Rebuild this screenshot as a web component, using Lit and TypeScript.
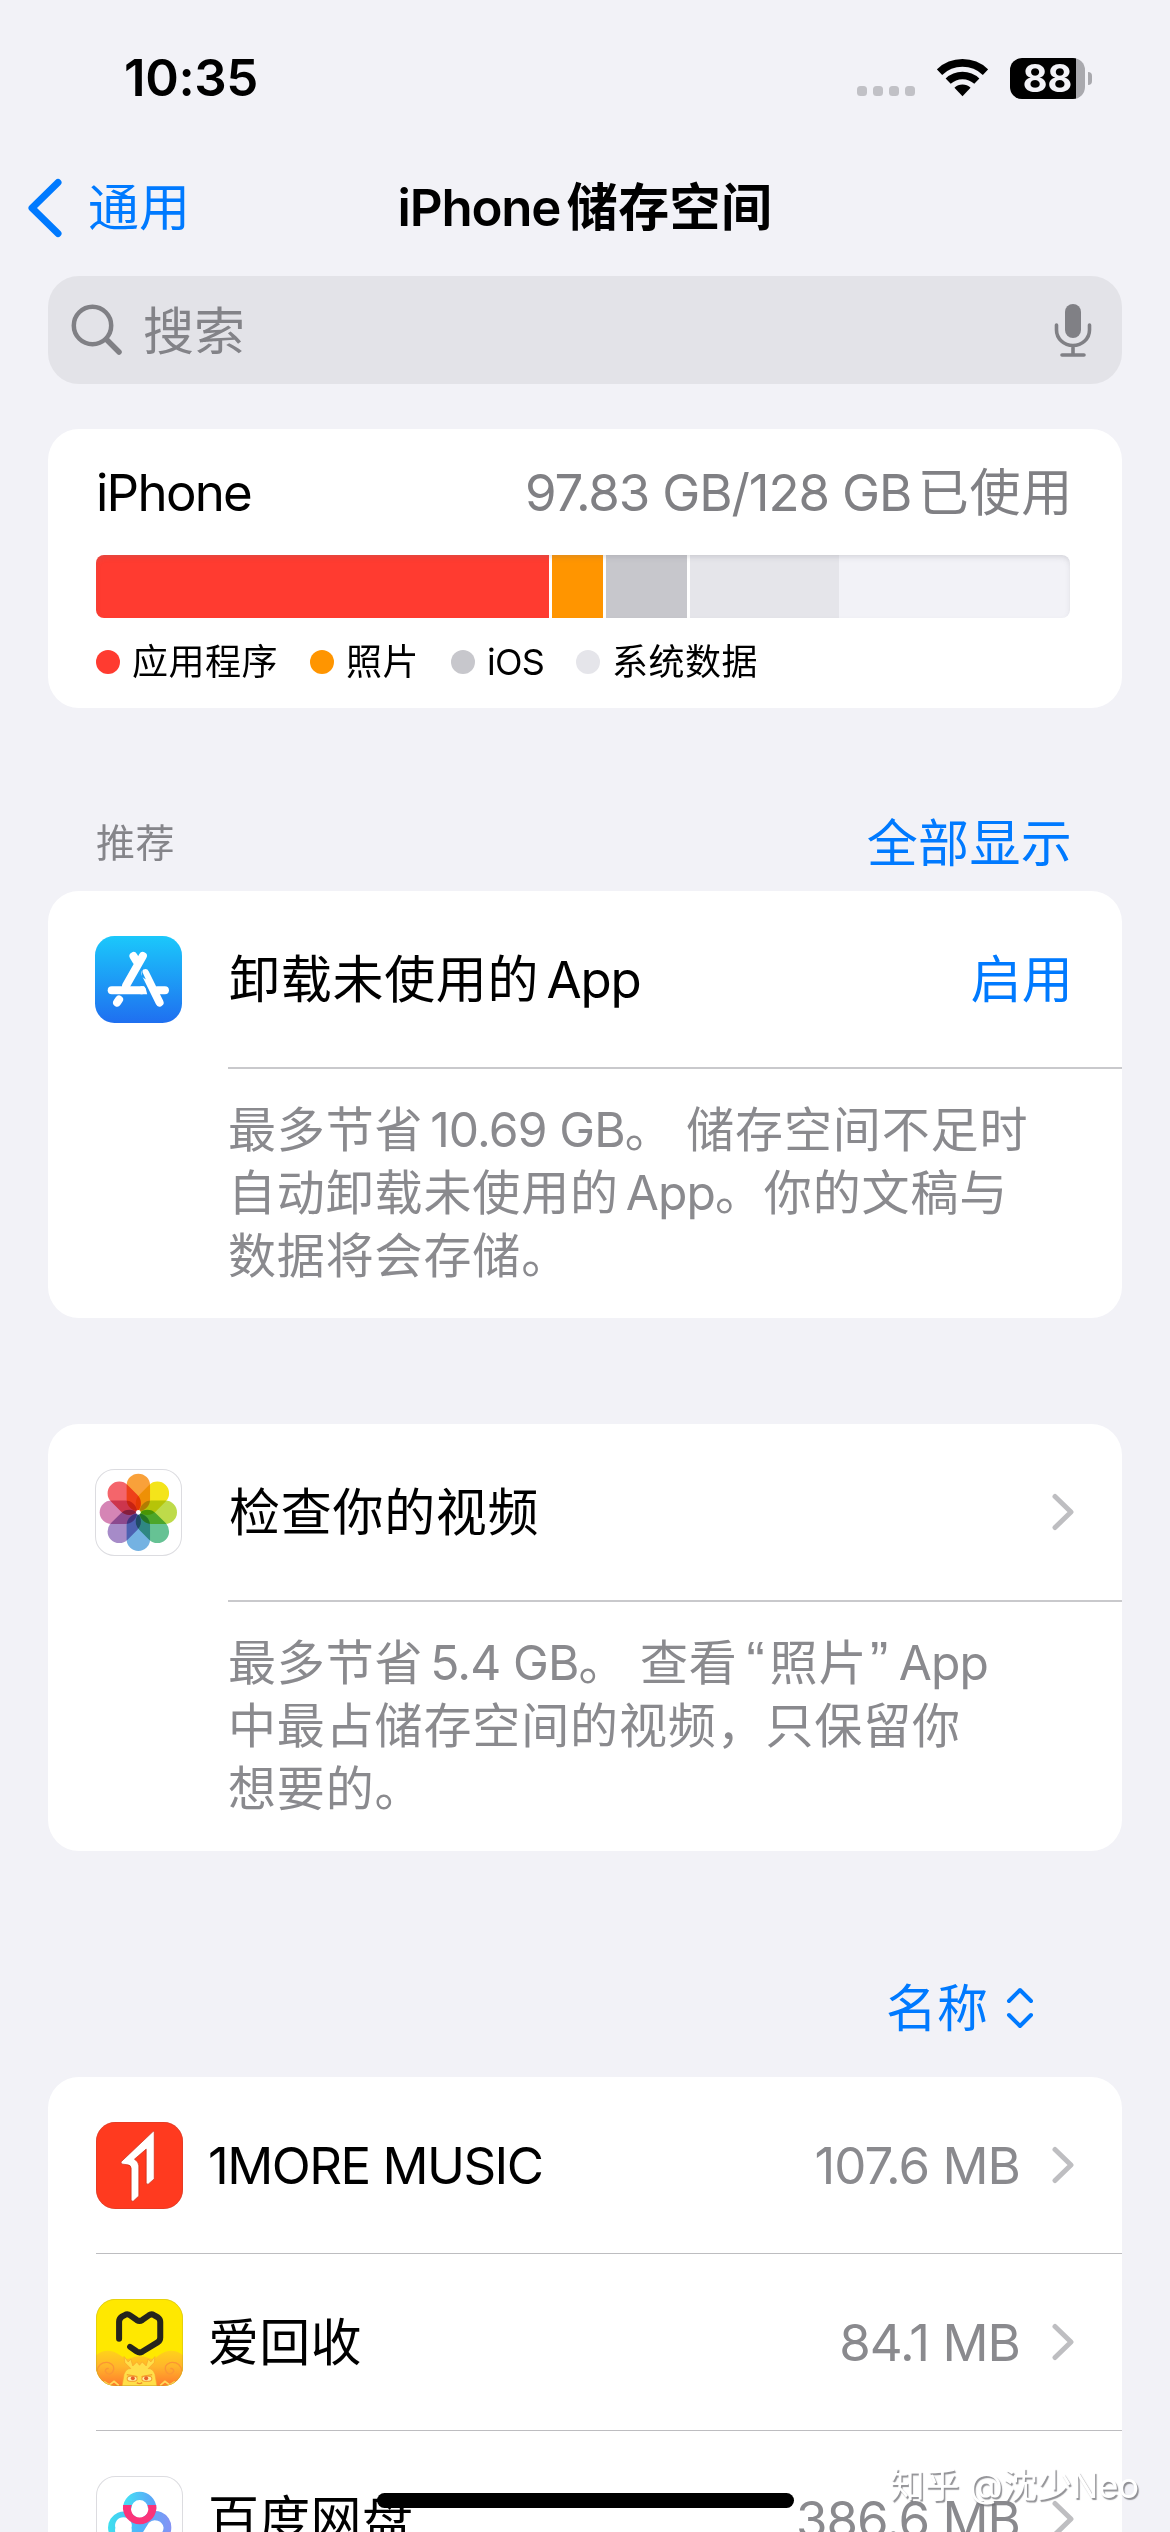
import { LitElement, html, css, svg, nothing } from "lit";
import { customElement, property } from "lit/decorators.js";

const HAN = /[\u3000-\u303f\u4e00-\u9fff\uff00-\uffef]/;
const HAN_PUNCT = /[\u3000-\u303f\uff00-\uffef]/;

/** Splits text into Han, Latin and quote-mark runs, so each gets its own tracking and edge spacing. */
function runs(text: string) {
  const parts =
    text.match(/[“”]|[\u3000-\u303f\u4e00-\u9fff\uff00-\uffef]+|[^“”\u3000-\u303f\u4e00-\u9fff\uff00-\uffef]+/g) ?? [];
  return parts.map((part, i) => {
    if (part === "“") return html`<span class="quote open">“</span>`;
    if (part === "”") return html`<span class="quote close">”</span>`;
    if (HAN.test(part)) return html`<span class="han">${part}</span>`;
    const prev = i > 0 ? parts[i - 1].slice(-1) : "";
    const next = i < parts.length - 1 ? parts[i + 1][0] : "";
    const before = prev && !HAN_PUNCT.test(prev) && part[0] !== " ";
    const after = next && !HAN_PUNCT.test(next) && part.slice(-1) !== " ";
    return html`<span class="latin ${before ? "gap-before" : ""} ${after ? "gap-after" : ""}">${part}</span>`;
  });
}

const textStyles = css`
  .han { letter-spacing: 0.014em; }
  .latin { letter-spacing: var(--latin-tracking, -0.022em); white-space: pre; }
  .gap-before { margin-left: 0.14em; }
  .gap-after { margin-right: 0.13em; }
  .quote { font-family: "Liberation Sans", sans-serif; font-size: 1.14em; line-height: 0; }
  .open { margin: 0 0.09em 0 0.16em; }
  .close { margin: 0 -0.04em 0 0.05em; }
`;

const appStoreIcon = svg`
  <defs>
    <linearGradient id="store" x1="0" y1="0" x2="0" y2="1">
      <stop offset="0" stop-color="#1bc8fb"/><stop offset="1" stop-color="#1f6ff0"/>
    </linearGradient>
  </defs>
  <rect width="260" height="260" rx="58" fill="url(#store)"/>
  <g stroke="#fff" stroke-width="24" stroke-linecap="round" fill="none">
    <path d="M115 60 L124 75"/>
    <path d="M143 60 L93 148"/>
    <path d="M150 111 L193 199"/>
    <path d="M50 162 H140"/>
    <path d="M186 162 H209"/>
    <path d="M72 190 L66 199"/>
  </g>
  <path d="M136 150 L147 150 Q154 160 156 174 L136 174Z" fill="#fff"/>
  <path d="M138 96 L145 88 Q142 96 142 108 L152 130 L140 122Z" fill="#1f9df6"/>`;

const petals = ["#f9a13a", "#f4e41a", "#bedb4a", "#66c294", "#74b2e2", "#a68bc8", "#d585b5", "#f4656b"];
const photosIcon = svg`
  <rect x="1.5" y="1.5" width="257" height="257" rx="57" fill="#fff" stroke="#dcdce0" stroke-width="3"/>
  <g class="petals">
    ${petals.map((c, i) => svg`<rect x="94.500" y="14" width="70" height="112" rx="35" fill=${c}
      transform="rotate(${i * 45} 129.5 129.5)"/>`)}
  </g>
  <circle cx="129.500" cy="129.500" r="7" fill="#fff"/>`;

const oneMoreIcon = svg`
  <rect width="260" height="260" rx="58" fill="#ff3a1f"/>
  <rect x="1" y="1" width="258" height="258" rx="57" fill="none" stroke="#b8402f" stroke-width="2" opacity=".6"/>
  <path d="M171 28 Q174 27 174 31 V170 L157 185 Q151 188 150 182 V81 L115 111 Q128 119 128 131 V221 L112 236 Q106 239 105 233 V138 Q104 129 95 128 L80 126 Q71 124 76 118Z"
    fill="#fff" stroke="#c8240f" stroke-width="2"/>`;

const recycleIcon = svg`
  <defs>
    <linearGradient id="glow" x1="0" y1="0" x2="0" y2="1">
      <stop offset="0" stop-color="#ffd21a"/><stop offset=".45" stop-color="#ffb52b"/><stop offset="1" stop-color="#ff7a2c"/>
    </linearGradient>
    <clipPath id="tile"><rect width="260" height="260" rx="58"/></clipPath>
  </defs>
  <g clip-path="url(#tile)">
    <rect width="260" height="260" fill="#ffe800"/>
    <path d="M0 168 Q34 142 72 168 Q92 182 100 178 Q130 164 162 178 Q172 182 188 168 Q226 142 260 168 V260 H0Z" fill="url(#glow)"/>
    <g fill="none" stroke="#fb9634" stroke-width="4">
      <path d="M2 216 Q10 186 38 190 Q60 198 50 218 Q38 232 28 216 Q28 206 38 208"/>
      <path d="M258 216 Q250 186 222 190 Q200 198 210 218 Q222 232 232 216 Q232 206 222 208"/>
    </g>
    <path d="M78 260 L84 224 Q92 206 104 208 L86 190 L84 172 L96 188 L104 180 L110 200 L122 188 L130 198 L138 188 L150 200 L156 180 L164 188 L176 172 L174 190 L156 208 Q168 206 176 224 L182 260Z" fill="#ffdf4a" stroke="#f7a52b" stroke-width="2"/>
    <path d="M92 226 L124 232 M168 226 L136 232" stroke="#f7a52b" stroke-width="4"/>
    <ellipse cx="108" cy="238" rx="15" ry="8" fill="#fff0a0" stroke="#f39a2e" stroke-width="3"/>
    <ellipse cx="152" cy="238" rx="15" ry="8" fill="#fff0a0" stroke="#f39a2e" stroke-width="3"/>
    <circle cx="110" cy="237" r="6" fill="#e8602a"/><circle cx="150" cy="237" r="6" fill="#e8602a"/>
    <path d="M122 250 Q130 256 138 250" fill="none" stroke="#f08a2c" stroke-width="4"/>
    <path d="M14 258 L26 248 L40 257 L54 246 L68 258 M192 258 L206 246 L220 257 L234 248 L246 258" fill="none" stroke="#ffd95a" stroke-width="5"/>
    <path d="M69 119 V68 Q69 59 77 53 L86 48 Q94 43 102 49 L122 63 Q130 68 138 63 L158 49 Q165 43 173 48 L185 55 Q192 60 192 69 V115 Q192 124 185 129 L139 157 Q130 162 122 157 L102 143"
      fill="none" stroke="#25241c" stroke-width="18" stroke-linecap="round" stroke-linejoin="round"/>
  </g>
  <rect x="1" y="1" width="258" height="258" rx="57" fill="none" stroke="#b7a520" stroke-width="2" opacity=".6"/>`;

const netdiskIcon = svg`
  <defs>
    <linearGradient id="ringTop" x1="0" y1="0" x2="1" y2="0"><stop offset="0" stop-color="#45dcf5"/><stop offset="1" stop-color="#5aa6f8"/></linearGradient>
    <linearGradient id="ringLow" x1="0" y1="0" x2="1" y2="0"><stop offset="0" stop-color="#3fe0ee"/><stop offset=".5" stop-color="#4fb4fa"/><stop offset="1" stop-color="#8592f4"/></linearGradient>
  </defs>
  <rect x="1.500" y="1.500" width="257" height="257" rx="57" fill="#fff" stroke="#dcdce0" stroke-width="3"/>
  <path fill="url(#ringLow)" fill-rule="evenodd"
    d="M36 155 A48 48 0 0 1 118 120 L130 132 L142 120 A48 48 0 0 1 225 155 A48 48 0 0 1 142 188 L130 178 L118 188 A48 48 0 0 1 36 155Z
       M58 155 A25 25 0 1 0 106 155 A25 25 0 1 0 58 155Z M134 178 L158 140 A26 26 0 0 1 202 155 A26 26 0 0 1 158 172Z"/>
  <circle cx="130.500" cy="97" r="27" fill="#fff"/>
  <path d="M93 97 A37.500 37.500 0 0 1 168 97" fill="none" stroke="url(#ringTop)" stroke-width="25"/>
  <path d="M81 87 H107 A26 26 0 1 0 154 87 H180 A50 50 0 1 1 81 87Z" fill="#fb3379"/>`;

const ICONS: Record<string, unknown> = {
  store: appStoreIcon,
  photos: photosIcon,
  onemore: oneMoreIcon,
  recycle: recycleIcon,
  netdisk: netdiskIcon,
};

@customElement("app-icon")
class AppIcon extends LitElement {
  @property() name = "";
  static styles = css`
    :host { display: block; width: 87px; height: 87px; flex: none; }
    .art { display: block; width: 100%; height: 100%; }
    .petals { isolation: isolate; }
    .petals rect { mix-blend-mode: multiply; }
  `;
  render() {
    return html`<svg class="art" viewBox="0 0 260 260">${ICONS[this.name]}</svg>`;
  }
}

@customElement("disclosure-chevron")
class DisclosureChevron extends LitElement {
  static styles = css`
    :host { display: block; width: 24px; height: 38px; flex: none; }
    .art { display: block; }
  `;
  render() {
    return html`<svg class="art" width="24" height="38" viewBox="0 0 24 38">
      <path d="M4 3.500 L20 19 L4 34.500" fill="none" stroke="#bebec1" stroke-width="5" stroke-linecap="round" stroke-linejoin="round"/>
    </svg>`;
  }
}

@customElement("status-bar")
class StatusBar extends LitElement {
  static styles = css`
    :host { display: flex; align-items: center; height: 156px; padding: 0 78px 0 124px; box-sizing: border-box; }
    .time { flex: 1; font-size: 51px; font-weight: 600; line-height: 60px; letter-spacing: -0.008em; color: #000; }
    .dots { display: flex; gap: 6px; margin: 26px 22px 0 0; }
    .dot { width: 10px; height: 10px; border-radius: 3.5px; background: #c1c1c6; }
    .wifi { display: block; margin-right: 22px; }
    .battery { display: flex; align-items: center; gap: 3px; }
    .cell { width: 75px; height: 41px; border-radius: 12px; display: flex; align-items: center; justify-content: center;
      box-sizing: border-box;
      background: linear-gradient(90deg, #000 66px, #a9a9ae 66px); color: #f2f2f7; font-size: 38px; line-height: 41px; font-weight: 700; letter-spacing: 0; }
    .cap { width: 4px; height: 13px; border-radius: 0 4px 4px 0; background: #a9a9ae; }
  `;
  render() {
    return html`
      <div class="time">10:35</div>
      <div class="dots">${[0, 1, 2, 3].map(() => html`<i class="dot"></i>`)}</div>
      <svg class="wifi" width="51" height="38" viewBox="-76 -111 152 113">
        <g fill="none" stroke="#000">
          <path d="M-68.500 -72.100 A99.500 99.500 0 0 1 68.500 -72.100" stroke-width="23"/>
          <path d="M-42.700 -45 A62 62 0 0 1 42.700 -45" stroke-width="22"/>
        </g>
        <path d="M0 0 L-24 -25.400 A35 35 0 0 1 24 -25.400Z"/>
      </svg>
      <div class="battery"><div class="cell">88</div><div class="cap"></div></div>`;
  }
}

@customElement("nav-bar")
class NavBar extends LitElement {
  static styles = [textStyles, css`
    :host { display: grid; grid-template-columns: 1fr auto 1fr; align-items: center; height: 103px; line-height: 60px; font-size: 51px; --latin-tracking: -0.024em; }
    .back { display: flex; align-items: center; gap: 25px; padding-left: 26px; color: #007aff; }
    .back .han { letter-spacing: 0; }
    .title { font-weight: 600; color: #000; }
    .title .han { letter-spacing: 0.008em; }
    .arrow { display: block; }
  `];
  render() {
    return html`
      <div class="back">
        <svg class="arrow" width="37" height="60" viewBox="0 0 37 60">
          <path d="M32 4.500 L6 30 L32 55.500" fill="none" stroke="#007aff" stroke-width="7" stroke-linecap="round" stroke-linejoin="round"/>
        </svg>
        <span>${runs("通用")}</span>
      </div>
      <div class="title">${runs("iPhone储存空间")}</div>`;
  }
}

@customElement("search-field")
class SearchField extends LitElement {
  static styles = [textStyles, css`
    :host { display: flex; align-items: center; height: 108px; margin: 17px 48px 0; padding: 0 30px 0 23px; box-sizing: border-box;
      border-radius: 31px; background: #e3e3e8; color: #838388; font-size: 51px; line-height: 60px; }
    .label { flex: 1; padding: 3px 0 0 20px; }
    .label .han { letter-spacing: 0; }
    .art { display: block; }
  `];
  render() {
    return html`
      <svg class="art" width="52" height="52" viewBox="0 0 52 52" fill="none" stroke="#808085" stroke-linecap="round">
        <circle cx="21.500" cy="21.500" r="18.700" stroke-width="4.500"/><path d="M35.500 35.500 L48 48" stroke-width="5.500"/>
      </svg>
      <span class="label">${runs("搜索")}</span>
      <svg class="art" width="38" height="54" viewBox="0 0 38 54" fill="none" stroke="#808085" stroke-width="3.600" stroke-linecap="round">
        <rect x="11" y="1" width="16" height="34" rx="8" fill="#808085" stroke="none"/>
        <path d="M2.500 22 V27 A16.500 15.500 0 0 0 35.500 27 V22 M19 43 V51 M8 52 H30"/>
      </svg>`;
  }
}

interface Segment { label: string; color: string; width: number; }

@customElement("storage-card")
class StorageCard extends LitElement {
  private segments: Segment[] = [
    { label: "应用程序", color: "#ff3b30", width: 453 },
    { label: "照片", color: "#ff9500", width: 51 },
    { label: "iOS", color: "#c7c7cc", width: 81 },
    { label: "系统数据", color: "#e5e5ea", width: 149 },
  ];
  static styles = [textStyles, css`
    :host { display: block; margin: 45px 48px 0; height: 279px; padding: 0 52px 0 48px; box-sizing: border-box; border-radius: 31px; background: #fff; }
    .head { display: flex; justify-content: space-between; align-items: center; height: 126px; margin-right: -3px; padding-top: 2px; box-sizing: border-box; font-size: 51px; line-height: 60px; color: #000; }
    .device { --latin-tracking: -0.034em; }
    .usage { color: #808084; }
    .bar { display: flex; gap: 3px; height: 63px; border-radius: 8px; overflow: hidden; background: #fff; position: relative; }
    .bar::after { content: ""; position: absolute; inset: 0; border-radius: 8px; box-shadow: inset 0 3px 6px -2px rgba(120, 120, 130, 0.3); }
    .part { flex: none; }
    .free { flex: 1; margin-left: -3px; background: #f2f2f7; }
    .legend { display: flex; align-items: center; height: 87px; gap: 32px; font-size: 36px; line-height: 44px; color: #000; }
    .key { display: flex; align-items: center; gap: 12px; }
    .swatch { width: 24px; height: 24px; border-radius: 50%; }
  `];
  render() {
    return html`
      <div class="head"><span class="device">${runs("iPhone")}</span><span class="usage">${runs("97.83 GB/128 GB已使用")}</span></div>
      <div class="bar">
        ${this.segments.map((s) => html`<div class="part" style="width:${s.width}px;background:${s.color}"></div>`)}
        <div class="free"></div>
      </div>
      <div class="legend">
        ${this.segments.map((s) => html`<div class="key"><i class="swatch" style="background:${s.color}"></i><span>${runs(s.label)}</span></div>`)}
      </div>`;
  }
}

@customElement("tip-card")
class TipCard extends LitElement {
  @property() icon = "";
  @property() heading = "";
  @property() action = "";
  @property({ attribute: false }) lines: string[] = [];
  static styles = [textStyles, css`
    :host { display: block; margin: 0 48px; height: 427px; border-radius: 31px; background: #fff; }
    .head { display: flex; align-items: center; height: 176px; padding: 0 49px 0 47px; font-size: 51px; line-height: 60px; color: #000; }
    .heading { flex: 1; padding: 1px 0 0 47px; }
    .action { color: #007aff; padding-top: 2px; }
    .action .han { letter-spacing: 0.005em; }
    .body { margin-left: 180px; border-top: 2px solid #c9c9cc; padding-top: 29px; font-size: 48px; line-height: 63px; color: #8a8a8e; --latin-tracking: -0.018em; }
    .body .han { letter-spacing: 0.018em; }
    .line { display: block; white-space: nowrap; }
    .chev { margin-right: -2px; }
  `];
  render() {
    return html`
      <div class="head">
        <app-icon .name=${this.icon}></app-icon>
        <span class="heading">${runs(this.heading)}</span>
        ${this.action ? html`<span class="action">${runs(this.action)}</span>` : html`<disclosure-chevron class="chev"></disclosure-chevron>`}
      </div>
      <div class="body">${this.lines.map((l) => html`<span class="line">${runs(l)}</span>`)}</div>`;
  }
}

@customElement("app-row")
class AppRow extends LitElement {
  @property() icon = "";
  @property() label = "";
  @property() size = "";
  @property({ type: Boolean }) last = false;
  static styles = [textStyles, css`
    :host { display: block; padding-left: 48px; }
    .row { display: flex; align-items: center; height: 176px; padding-right: 47px; font-size: 51px; line-height: 60px; color: #000; }
    .label { flex: 1; padding: 2px 0 0 25px; --latin-tracking: -0.03em; }
    .label .han { letter-spacing: 0.006em; }
    .size { color: #8a8a8e; padding: 2px 31px 0 0; --latin-tracking: -0.019em; }
    .rule { height: 1px; background: #bdbdc0; }
  `];
  render() {
    return html`
      <div class="row">
        <app-icon .name=${this.icon}></app-icon>
        <span class="label">${runs(this.label)}</span>
        <span class="size">${runs(this.size)}</span>
        <disclosure-chevron></disclosure-chevron>
      </div>
      ${this.last ? nothing : html`<div class="rule"></div>`}`;
  }
}

@customElement("app-root")
class AppRoot extends LitElement {
  static styles = [textStyles, css`
    :host { display: block; position: relative; width: 1170px; height: 2532px; overflow: hidden; background: #f2f2f7;
      font-family: Inter, "Noto Sans CJK SC", sans-serif; }
    .section { display: flex; justify-content: space-between; align-items: center; height: 96px; margin-top: 87px; padding: 0 98px 0 96px; line-height: 60px; }
    .caption { font-size: 39px; color: #85858a; }
    .link { font-size: 51px; color: #007aff; padding-top: 2px; }
    .link .han { letter-spacing: 0.006em; }
    .second { margin-top: 106px; }
    .sort { display: flex; justify-content: flex-end; align-items: center; gap: 18px; height: 226px; padding: 88px 136px 0 0; box-sizing: border-box;
      font-size: 51px; line-height: 60px; color: #007aff; }
    .sort .han { letter-spacing: 0; }
    .sort span { padding-top: 1px; }
    .updown { display: block; }
    .list { margin: 0 48px; border-radius: 31px 31px 0 0; background: #fff; }
    .home { position: absolute; left: 377px; top: 2493px; width: 417px; height: 15px; border-radius: 8px; background: #000; }
    .mark { position: absolute; left: 890px; top: 2463px; font-size: 34.7px; line-height: 44px; color: #fff; white-space: nowrap;
      text-shadow: 1.5px 1.5px 1px rgba(110, 110, 115, 0.75); }
  `];
  render() {
    return html`
      <status-bar></status-bar>
      <nav-bar></nav-bar>
      <search-field></search-field>
      <storage-card></storage-card>
      <div class="section"><span class="caption">${runs("推荐")}</span><span class="link">${runs("全部显示")}</span></div>
      <tip-card icon="store" heading="卸载未使用的App" action="启用"
        .lines=${["最多节省10.69 GB。 储存空间不足时", "自动卸载未使用的App。你的文稿与", "数据将会存储。"]}></tip-card>
      <tip-card class="second" icon="photos" heading="检查你的视频"
        .lines=${["最多节省5.4 GB。 查看“照片” App", "中最占储存空间的视频，只保留你", "想要的。"]}></tip-card>
      <div class="sort">
        <span>${runs("名称")}</span>
        <svg class="updown" width="28" height="42" viewBox="0 0 28 42" fill="none" stroke="#007aff" stroke-width="4" stroke-linecap="round" stroke-linejoin="round">
          <path d="M3 14 L14 3 L25 14 M3 28 L14 39 L25 28"/>
        </svg>
      </div>
      <div class="list">
        <app-row icon="onemore" label="1MORE MUSIC" size="107.6 MB"></app-row>
        <app-row icon="recycle" label="爱回收" size="84.1 MB"></app-row>
        <app-row icon="netdisk" label="百度网盘" size="386.6 MB" last></app-row>
      </div>
      <div class="home"></div>
      <div class="mark">知乎 @沈少Neo</div>`;
  }
}
